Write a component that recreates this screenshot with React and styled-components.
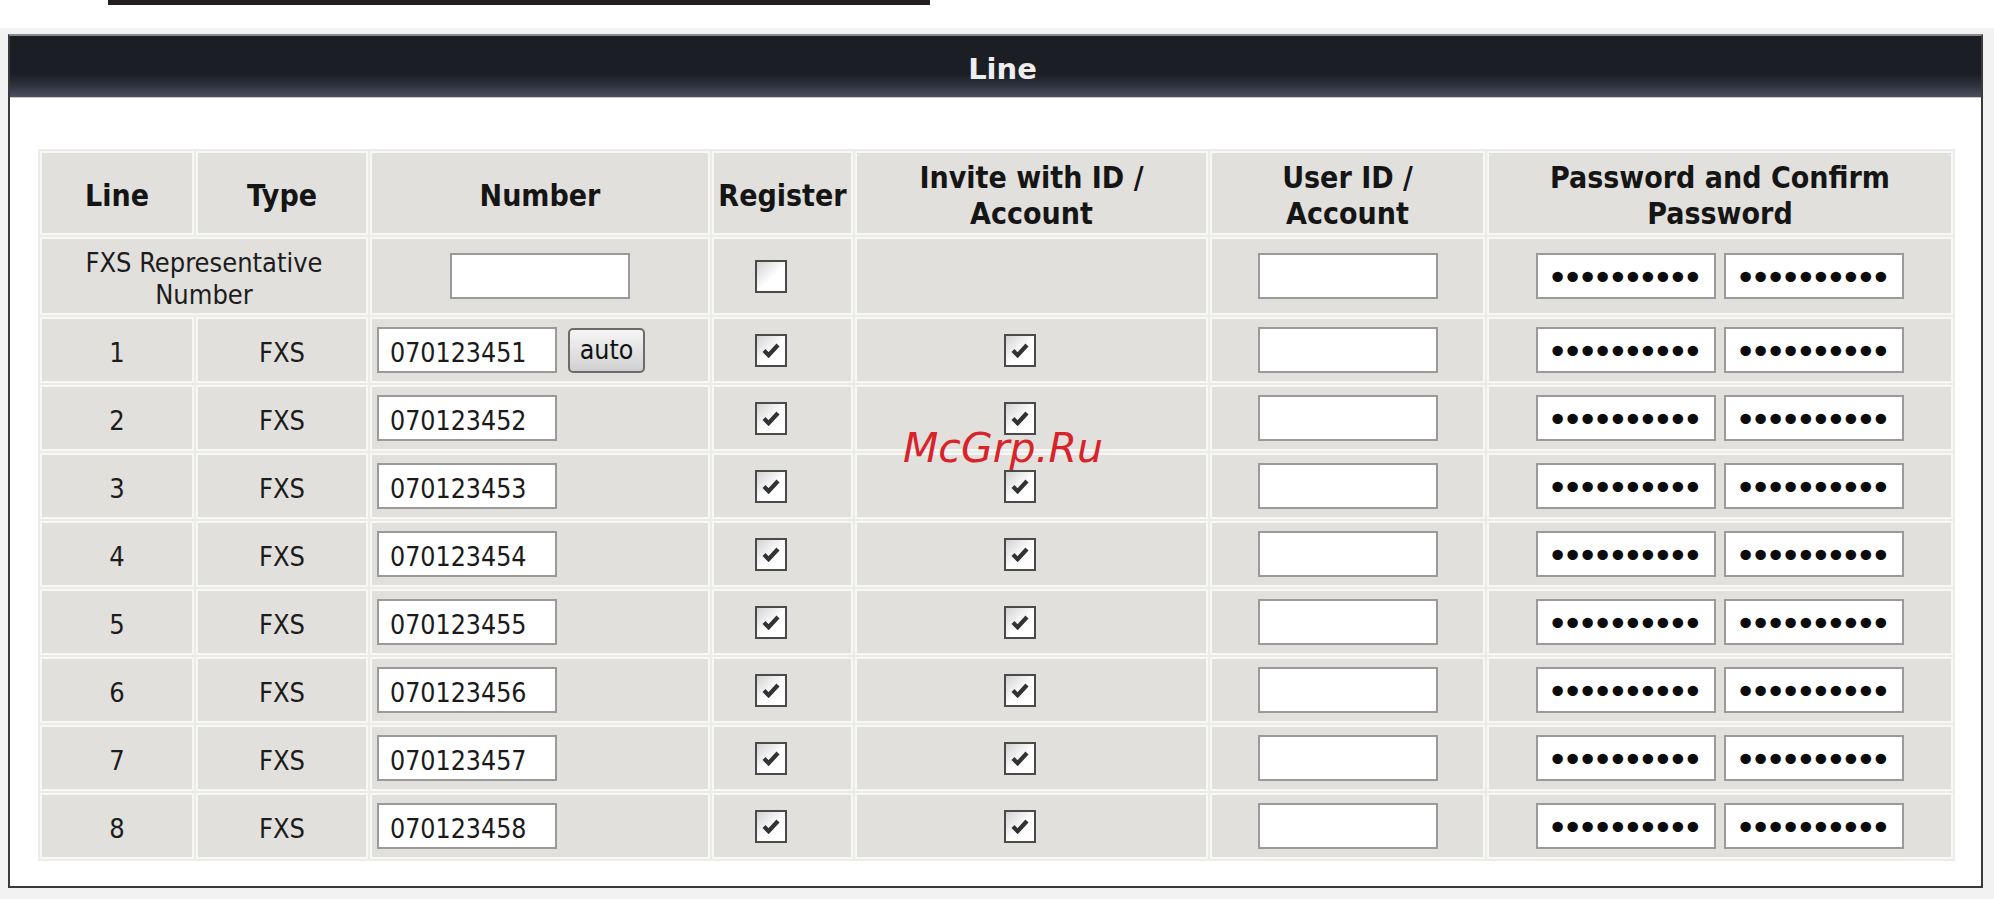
import styled, { createGlobalStyle } from 'styled-components';

const GlobalStyle = createGlobalStyle`
  body {
    margin: 0;
    background: #fff;
    font-family: "DejaVu Sans Condensed", "DejaVu Sans", sans-serif;
    font-stretch: condensed;
  }
`;

const TopStrip = styled.div`
  height: 28px;
  padding-left: 108px;
  background: #fff;
`;

const TopRule = styled.div`
  width: 822px;
  height: 5px;
  background: #231f20;
`;

const Page = styled.div`
  background: #f2f2f2;
  padding: 6px 11px 11px 8px;
`;

const Panel = styled.section`
  position: relative;
  background: #fff;
  border: 2px solid #3a3a3a;
  border-top-color: #8a8a8a;
`;

const PanelHeader = styled.h2`
  box-sizing: border-box;
  margin: 0;
  height: 62px;
  display: flex;
  align-items: center;
  justify-content: center;
  padding: 4px 0 0 14px;
  background: linear-gradient(to bottom, #1b1e24 0%, #1b1e24 62%, #2d313b 80%, #4a4f61 100%);
  border-bottom: 1px solid #c8c9d0;
  color: #eeeeee;
  font: bold 29px "DejaVu Sans", sans-serif;
  font-stretch: normal;
`;

const PanelBody = styled.div`
  padding: 51px 26px 25px 28px;
`;

const Grid = styled.table`
  width: 1917px;
  table-layout: fixed;
  border-collapse: separate;
  border-spacing: 2px;
  background: #ebebe8;
`;

const Row = styled.tr`
  height: ${(p) => p.$h}px;
`;

const HeadCell = styled.th`
  box-sizing: border-box;
  background: #e1e0dc;
  border: 2px solid #f7f7f5;
  padding: 5px 4px 0;
  text-align: center;
  vertical-align: middle;
  font-size: 30px;
  line-height: 36px;
  font-weight: bold;
  color: #151515;
`;

const Cell = styled.td`
  box-sizing: border-box;
  background: #e1e0dc;
  border: 2px solid #f7f7f5;
  padding: ${(p) => (p.$text ? '5px' : '0')} ${(p) => (p.$left ? '5px' : '4px')} 0;
  text-align: ${(p) => (p.$left ? 'left' : 'center')};
  vertical-align: middle;
  font-size: 27px;
  line-height: 32px;
  color: #1c1c1c;
`;

const NumberWrap = styled.div`
  display: flex;
  align-items: center;
  justify-content: ${(p) => (p.$center ? 'center' : 'flex-start')};
  gap: 11px;
`;

const PassWrap = styled.div`
  display: flex;
  justify-content: center;
  gap: 8px;
`;

const Field = styled.input`
  box-sizing: border-box;
  width: 180px;
  height: 46px;
  margin: 0;
  padding: 4px 11px 0;
  border: 2px solid #9a9a9a;
  background: #fff;
  font-family: "DejaVu Sans Condensed", "DejaVu Sans", sans-serif;
  font-stretch: condensed;
  font-size: 26.5px;
  color: #1a1a1a;
  outline: none;
  vertical-align: middle;
`;

const SecretField = styled(Field)`
  padding: 2px 0 0 9px;
  font-family: "DejaVu Sans", sans-serif;
  font-stretch: normal;
  font-size: 36px;
  letter-spacing: -6.2px;
  color: #0c0c0c;
`;

const AutoButton = styled.button`
  box-sizing: border-box;
  width: 77px;
  height: 45px;
  padding: 0 0 2px;
  border: 2px solid #6b6b6b;
  border-radius: 5px;
  background: linear-gradient(to bottom, #f6f6f6, #d0d0d0);
  font-family: "DejaVu Sans Condensed", "DejaVu Sans", sans-serif;
  font-stretch: condensed;
  font-size: 26.5px;
  color: #111;
`;

const Box = styled.span`
  box-sizing: border-box;
  display: inline-flex;
  align-items: center;
  justify-content: center;
  vertical-align: middle;
  width: 32px;
  height: 33px;
  margin-right: 23px;
  border: 2px solid #4a4a4a;
  background: linear-gradient(135deg, #d2d2d2 0%, #ffffff 55%);
`;

const Watermark = styled.div`
  position: absolute;
  left: 893px;
  top: 392px;
  font-family: "DejaVu Sans", sans-serif;
  font-style: italic;
  font-stretch: normal;
  font-size: 41px;
  line-height: 1;
  color: #d8232a;
  pointer-events: none;
`;

const Check = ({ on }) => (
  <Box>
    {on && (
      <svg width="18" height="15" viewBox="0 0 18 15">
        <path d="M2 7.6 L6.6 12.2 L16 2" stroke="#333" strokeWidth="4.2" fill="none" />
      </svg>
    )}
  </Box>
);

const Secret = () => (
  <PassWrap>
    <SecretField type="password" defaultValue="xxxxxxxxxx" readOnly />
    <SecretField type="password" defaultValue="xxxxxxxxxx" readOnly />
  </PassWrap>
);

const lines = [1, 2, 3, 4, 5, 6, 7, 8];

const App = () => (
  <>
    <GlobalStyle />
    <TopStrip>
      <TopRule />
    </TopStrip>
    <Page>
      <Panel>
        <PanelHeader>Line</PanelHeader>
        <PanelBody>
          <Grid>
            <colgroup>
              <col style={{ width: 154 }} />
              <col style={{ width: 172 }} />
              <col style={{ width: 340 }} />
              <col style={{ width: 141 }} />
              <col style={{ width: 353 }} />
              <col style={{ width: 275 }} />
              <col style={{ width: 466 }} />
            </colgroup>
            <tbody>
              <Row $h={84}>
                <HeadCell>Line</HeadCell>
                <HeadCell>Type</HeadCell>
                <HeadCell>Number</HeadCell>
                <HeadCell>Register</HeadCell>
                <HeadCell>Invite with ID /<br />Account</HeadCell>
                <HeadCell>User ID /<br />Account</HeadCell>
                <HeadCell>Password and Confirm<br />Password</HeadCell>
              </Row>
              <Row $h={78}>
                <Cell $text colSpan={2}>FXS Representative<br />Number</Cell>
                <Cell>
                  <NumberWrap $center>
                    <Field type="text" defaultValue="" />
                  </NumberWrap>
                </Cell>
                <Cell><Check /></Cell>
                <Cell />
                <Cell><Field type="text" defaultValue="" /></Cell>
                <Cell><Secret /></Cell>
              </Row>
              {lines.map((n) => (
                <Row $h={66} key={n}>
                  <Cell $text>{n}</Cell>
                  <Cell $text>FXS</Cell>
                  <Cell $left>
                    <NumberWrap>
                      <Field type="text" defaultValue={`07012345${n}`} />
                      {n === 1 && <AutoButton type="button">auto</AutoButton>}
                    </NumberWrap>
                  </Cell>
                  <Cell><Check on /></Cell>
                  <Cell><Check on /></Cell>
                  <Cell><Field type="text" defaultValue="" /></Cell>
                  <Cell><Secret /></Cell>
                </Row>
              ))}
            </tbody>
          </Grid>
        </PanelBody>
        <Watermark>McGrp.Ru</Watermark>
      </Panel>
    </Page>
  </>
);

export default App;
